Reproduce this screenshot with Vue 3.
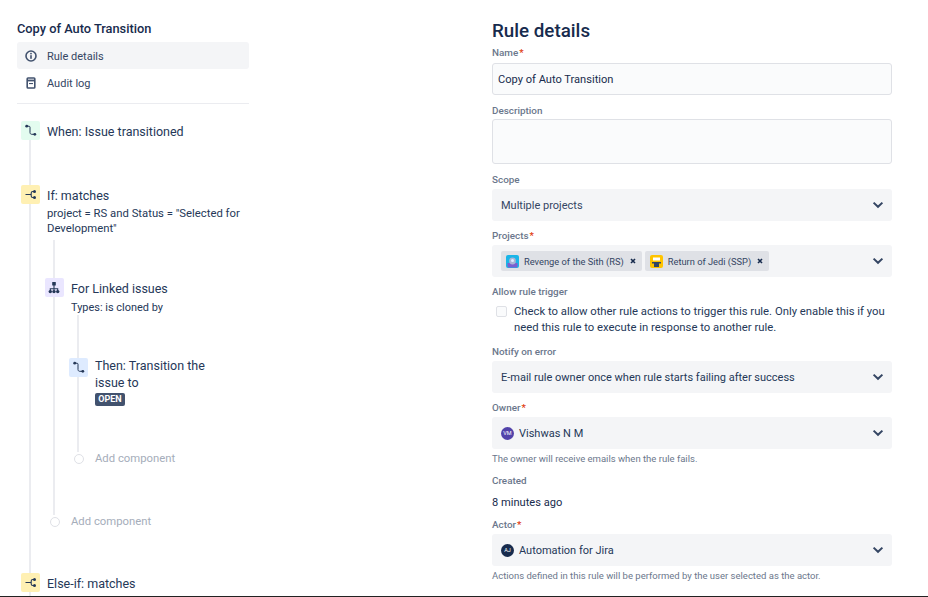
<template>
  <div class="page">
    <!-- Left: rule tree -->
    <aside class="side">
      <h2 class="rule-title">Copy of Auto Transition</h2>
      <nav class="menu">
        <div class="menu-item active">
          <svg class="menu-icon" viewBox="0 0 14 14" width="14" height="14">
            <circle cx="7" cy="7" r="5" fill="none" stroke="#42526e" stroke-width="1.6" />
            <rect x="6.2" y="6.2" width="1.6" height="3.6" fill="#42526e" />
            <circle cx="7" cy="4.6" r="0.9" fill="#42526e" />
          </svg>
          <span>Rule details</span>
        </div>
        <div class="menu-item">
          <svg class="menu-icon" viewBox="0 0 14 14" width="14" height="14">
            <rect x="3.2" y="2" width="7.6" height="10" rx="0.8" fill="none" stroke="#42526e" stroke-width="1.6" />
            <rect x="4" y="3.6" width="6" height="1.8" fill="#42526e" />
            <rect x="5" y="7" width="4" height="1.1" fill="#42526e" />
          </svg>
          <span>Audit log</span>
        </div>
      </nav>
      <div class="divider"></div>

      <div class="tree">
        <div class="step when">
          <span class="step-icon green">
            <svg viewBox="0 0 19 19" width="19" height="19"><path d="M6 5.2h2c.6 0 1 .4 1 1v5.4c0 1 .7 1.7 1.7 1.7H13.5" fill="none" stroke="#253858" stroke-width="1" /><circle cx="5.7" cy="5.2" r="1.4" fill="#253858" /><circle cx="13.8" cy="13.3" r="1.4" fill="#253858" /></svg>
          </span>
          <div class="step-title">When: Issue transitioned</div>
        </div>

        <div class="step cond">
          <span class="step-icon yellow">
            <svg viewBox="0 0 19 19" width="19" height="19"><path d="M4.5 9.5h5.5M13.4 6.5h-1.6c-1 0-1.6.6-1.6 1.5v3c0 .9.6 1.5 1.6 1.5h1.6" fill="none" stroke="#253858" stroke-width="1.1" /><circle cx="13.5" cy="6.5" r="1.5" fill="#253858" /><circle cx="13.5" cy="12.5" r="1.5" fill="#253858" /></svg>
          </span>
          <div>
            <div class="step-title">If: matches</div>
            <div class="step-desc">project = RS and Status = "Selected for Development"</div>
          </div>
        </div>

        <div class="branch outer">
          <div class="step loop">
            <span class="step-icon purple">
              <svg viewBox="0 0 19 19" width="19" height="19"><rect x="7.2" y="4" width="3.6" height="3.6" rx="0.5" fill="#253858" /><path d="M9 7v6M5.3 13v-2.2h7.4V13" fill="none" stroke="#253858" stroke-width="1.1" /><circle cx="5.3" cy="13.6" r="1.7" fill="#253858" /><circle cx="9" cy="13.6" r="1.7" fill="#253858" /><circle cx="12.7" cy="13.6" r="1.7" fill="#253858" /></svg>
            </span>
            <div>
              <div class="step-title">For Linked issues</div>
              <div class="step-desc types">Types: is cloned by</div>
            </div>
          </div>

          <div class="branch inner">
            <div class="step then">
              <span class="step-icon blue">
                <svg viewBox="0 0 19 19" width="19" height="19"><path d="M6 5.2h2c.6 0 1 .4 1 1v5.4c0 1 .7 1.7 1.7 1.7H13.5" fill="none" stroke="#253858" stroke-width="1" /><circle cx="5.7" cy="5.2" r="1.4" fill="#253858" /><circle cx="13.8" cy="13.3" r="1.4" fill="#253858" /></svg>
              </span>
              <div>
                <div class="step-title wrap">Then: Transition the issue to</div>
                <span class="lozenge">OPEN</span>
              </div>
            </div>
            <div class="add add-inner"><span class="add-dot"></span>Add component</div>
          </div>

          <div class="add add-outer"><span class="add-dot"></span>Add component</div>
        </div>

        <div class="step elseif">
          <span class="step-icon yellow">
            <svg viewBox="0 0 19 19" width="19" height="19"><path d="M4.5 9.5h5.5M13.4 6.5h-1.6c-1 0-1.6.6-1.6 1.5v3c0 .9.6 1.5 1.6 1.5h1.6" fill="none" stroke="#253858" stroke-width="1.1" /><circle cx="13.5" cy="6.5" r="1.5" fill="#253858" /><circle cx="13.5" cy="12.5" r="1.5" fill="#253858" /></svg>
          </span>
          <div class="step-title">Else-if: matches</div>
        </div>
      </div>
    </aside>

    <!-- Right: rule details form -->
    <main class="form">
      <h1 class="form-title">Rule details</h1>

      <label class="field-label first">Name<span class="req">*</span></label>
      <div class="text-input">Copy of Auto Transition</div>

      <label class="field-label desc-label">Description</label>
      <div class="text-area"></div>

      <label class="field-label desc-label">Scope</label>
      <div class="select"><span>Multiple projects</span><svg class="chev" viewBox="0 0 12 8" width="12" height="8"><path d="M1.6 1.6 6 5.8l4.4-4.2" fill="none" stroke="#344563" stroke-width="2" /></svg></div>

      <label class="field-label">Projects<span class="req">*</span></label>
      <div class="select">
        <div class="chips">
          <span v-for="p in projects" :key="p.name" class="chip">
            <svg class="chip-avatar" viewBox="0 0 13 13" width="13" height="13">
              <template v-if="p.kind === 'sith'">
                <rect width="13" height="13" rx="2" fill="#19b5e8" />
                <path d="M1.5 8h10v3a1.5 1.5 0 0 1-1.5 1.5H3A1.5 1.5 0 0 1 1.5 11z" fill="#7a5fd0" />
                <circle cx="6.5" cy="6" r="3.4" fill="#a9b4d6" />
                <circle cx="6.5" cy="5.6" r="1.5" fill="#deebff" />
              </template>
              <template v-else>
                <rect width="13" height="13" rx="2" fill="#ffc400" />
                <rect x="3" y="2.5" width="7" height="3" fill="#fff" />
                <path d="M2 7h9v1.6H2zM4 8.6h5V12H4z" fill="#344563" />
              </template>
            </svg>
            <span class="chip-text">{{ p.name }}</span>
            <svg class="chip-x" viewBox="0 0 8 8" width="8" height="8"><path d="M2 2l4 4M6 2 2 6" stroke="#172b4d" stroke-width="1.6" /></svg>
          </span>
        </div>
        <svg class="chev" viewBox="0 0 12 8" width="12" height="8"><path d="M1.6 1.6 6 5.8l4.4-4.2" fill="none" stroke="#344563" stroke-width="2" /></svg>
      </div>

      <label class="field-label">Allow rule trigger</label>
      <div class="check-row">
        <span class="checkbox"></span>
        <span class="check-text">Check to allow other rule actions to trigger this rule. Only enable this if you need this rule to execute in response to another rule.</span>
      </div>

      <label class="field-label notify">Notify on error</label>
      <div class="select"><span class="dark">E-mail rule owner once when rule starts failing after success</span><svg class="chev" viewBox="0 0 12 8" width="12" height="8"><path d="M1.6 1.6 6 5.8l4.4-4.2" fill="none" stroke="#344563" stroke-width="2" /></svg></div>

      <label class="field-label">Owner<span class="req">*</span></label>
      <div class="select">
        <span class="user"><span class="avatar vm">VM</span>Vishwas N M</span>
        <svg class="chev" viewBox="0 0 12 8" width="12" height="8"><path d="M1.6 1.6 6 5.8l4.4-4.2" fill="none" stroke="#344563" stroke-width="2" /></svg>
      </div>
      <p class="help">The owner will receive emails when the rule fails.</p>

      <label class="field-label">Created</label>
      <p class="created-value">8 minutes ago</p>

      <label class="field-label">Actor<span class="req">*</span></label>
      <div class="select">
        <span class="user"><span class="avatar aj">AJ</span>Automation for Jira</span>
        <svg class="chev" viewBox="0 0 12 8" width="12" height="8"><path d="M1.6 1.6 6 5.8l4.4-4.2" fill="none" stroke="#344563" stroke-width="2" /></svg>
      </div>
      <p class="help">Actions defined in this rule will be performed by the user selected as the actor.</p>
    </main>
  </div>
</template>

<script setup>
const projects = [
  { name: 'Revenge of the Sith (RS)', kind: 'sith' },
  { name: 'Return of Jedi (SSP)', kind: 'jedi' }
];
</script>

<style>
html, body {
  margin: 0;
  background: #fff;
  overflow: hidden;
}
</style>

<style scoped>
.page {
  display: flex;
  height: 596px;
  overflow: hidden;
  border-bottom: 1px solid #222;
  font-family: Roboto, "Noto Sans", sans-serif;
  color: #172b4d;
}

/* left column */
.side {
  width: 232px;
  margin-left: 17px;
  flex: none;
}

.rule-title {
  margin: 20px 0 5px;
  font-size: 12.8px;
  line-height: 17px;
  font-weight: 500;
}

.menu-item {
  display: flex;
  align-items: center;
  height: 27px;
  border-radius: 3px;
  font-size: 11px;
  color: #344563;
}

.menu-item span {
  padding-top: 2px;
}

.menu-item.active {
  background: #f4f5f7;
}

.menu-icon {
  margin: 0 9px 0 7px;
}

.divider {
  height: 1px;
  background: #ebecf0;
  margin: 7px 0 17px;
}

.tree {
  position: relative;
  padding-left: 4px;
}

.tree::before,
.branch::before {
  content: "";
  position: absolute;
  width: 2px;
  background: #ebecf0;
}

.tree::before {
  left: 12px;
  top: 18px;
  bottom: -40px;
}

.step {
  display: flex;
  gap: 7px;
  position: relative;
}

.step-icon {
  width: 19px;
  height: 19px;
  flex: none;
  border-radius: 2px;
  display: block;
}

.step-icon svg {
  display: block;
}

.green { background: #e3fcef; }
.yellow { background: #fff0b3; }
.purple { background: #eae6ff; }
.blue { background: #deebff; }

.step-title {
  padding-top: 1px;
  font-size: 12.5px;
  line-height: 20px;
  color: #253858;
}

.step-desc {
  font-size: 11.3px;
  line-height: 15px;
  color: #253858;
  width: 205px;
}

.cond {
  margin-top: 43px;
}

.branch {
  position: relative;
}

.outer {
  margin-left: 24px;
  padding-top: 42px;
}

.outer::before {
  left: 8px;
  top: 4px;
  height: 275px;
}

.types {
  margin-top: 1px;
  font-size: 10.95px;
}

.inner {
  margin-left: 24px;
  padding-top: 43px;
}

.inner::before {
  left: 8px;
  top: 0;
  height: 137px;
}

.wrap {
  width: 128px;
  padding-top: 0;
  line-height: 17px;
  margin-top: -1px;
}

.lozenge {
  display: block;
  width: 30px;
  height: 13px;
  margin-top: 2px;
  border-radius: 2px;
  background: #42526e;
  color: #fff;
  font-size: 9px;
  line-height: 13px;
  font-weight: 700;
  text-align: center;
}

.add {
  display: flex;
  align-items: center;
  gap: 11px;
  font-size: 11.3px;
  line-height: 16px;
  color: #a5adba;
  position: relative;
}

.add-dot {
  width: 8px;
  height: 8px;
  border-radius: 50%;
  border: 1px solid #dfe1e6;
  background: #fff;
  margin-left: 5px;
  flex: none;
}

.add-inner {
  margin-top: 45px;
}

.add-outer {
  margin-top: 47px;
}

.elseif {
  margin-top: 43px;
}

/* right column */
.form {
  width: 400px;
  margin-left: 243px;
  flex: none;
}

.form-title {
  margin: 19px 0 0;
  font-size: 18.8px;
  line-height: 24px;
  font-weight: 500;
  color: #172b4d;
}

.field-label {
  display: block;
  margin-top: 8px;
  font-size: 9.9px;
  line-height: 14px;
  font-weight: 500;
  color: #6b778c;
}

.field-label.first {
  margin-top: 3px;
}

.field-label.desc-label {
  margin-top: 9px;
}

.field-label.notify {
  margin-top: 9px;
}

.req {
  color: #de350b;
  margin-left: 1px;
}

.text-input,
.text-area {
  box-sizing: border-box;
  background: #fafbfc;
  border: 1px solid #dfe1e6;
  border-radius: 3px;
}

.text-input {
  height: 32px;
  margin-top: 3px;
  padding-left: 5px;
  font-size: 11.1px;
  line-height: 32px;
  color: #172b4d;
}

.text-area {
  height: 45px;
  margin-top: 1px;
}

.select {
  box-sizing: border-box;
  height: 32px;
  margin-top: 2px;
  padding: 0 8px 0 9px;
  display: flex;
  align-items: center;
  justify-content: space-between;
  background: #f4f5f7;
  border-radius: 3px;
  font-size: 11px;
  color: #344563;
}

.dark {
  color: #253858;
}

.chips {
  display: flex;
  gap: 3px;
}

.chip {
  display: flex;
  align-items: center;
  height: 20px;
  padding: 0 5px;
  border-radius: 2px;
  background: #dfe1e6;
  font-size: 9.3px;
}

.chip-avatar {
  margin-right: 5px;
}

.chip-x {
  margin-left: 5px;
}

.user {
  display: flex;
  align-items: center;
  gap: 5px;
  color: #253858;
}

.avatar {
  width: 13px;
  height: 13px;
  border-radius: 50%;
  color: #fff;
  font-size: 5.5px;
  line-height: 13px;
  text-align: center;
}

.vm { background: #5243aa; }
.aj { background: #172b4d; }

.check-row {
  display: flex;
  gap: 7px;
  padding-left: 4px;
  margin-top: 4px;
}

.checkbox {
  box-sizing: border-box;
  width: 11px;
  height: 11px;
  margin-top: 3px;
  flex: none;
  border: 1px solid #dfe1e6;
  border-radius: 2px;
  background: #fafbfc;
}

.check-text {
  padding-top: 1px;
  font-size: 11.3px;
  line-height: 16px;
  color: #253858;
}

.help {
  margin: 3px 0 0;
  font-size: 9.5px;
  line-height: 14px;
  color: #6b778c;
}

.created-value {
  margin: 7px 0 -1px;
  font-size: 11.1px;
  line-height: 16px;
  color: #172b4d;
}
</style>
